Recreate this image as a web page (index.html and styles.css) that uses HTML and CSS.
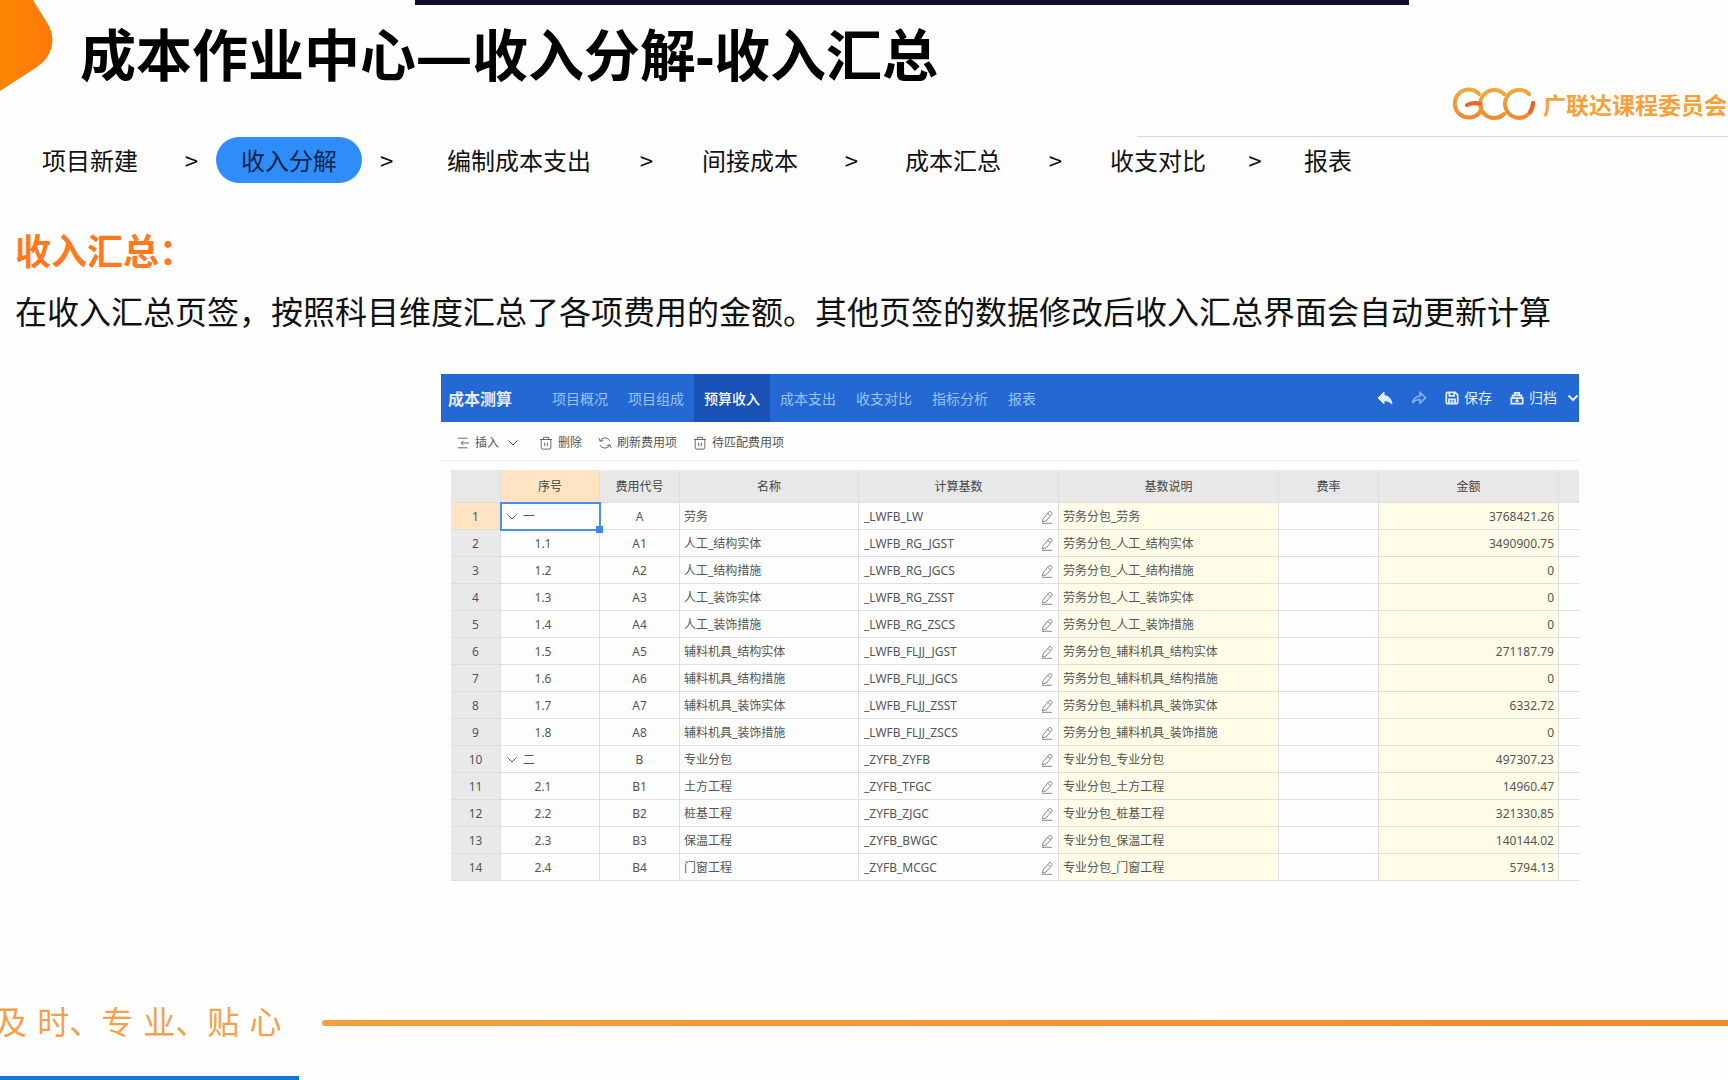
FILE: index.html
```html
<!DOCTYPE html>
<html lang="zh-CN">
<head>
<meta charset="utf-8">
<title>成本作业中心</title>
<link rel="stylesheet" href="styles.css">
</head>
<body>
<svg width="0" height="0" class="defs" aria-hidden="true">
  <symbol id="pen" viewBox="0 0 14 14"><path d="M3 9 8.500 2.200q1.500-1.400 2.800-.2t.4 2.600L6 11 2.300 12zM2 13.300h10M8 3.500l2.500 2"/></symbol>
  <symbol id="chev" viewBox="0 0 12 12"><path d="M1.500 3.500 6 8l4.500-4.500"/></symbol>
  <symbol id="trash" viewBox="0 0 16 16"><path d="M1 4h14M5 4V1.500h6V4M2.500 4v9q0 2 2 2h7q2 0 2-2V4M6.500 7.500v4M9.500 7.500v4"/></symbol>
</svg>
<div class="slide">
  <header class="top">
    <svg class="corner" viewBox="0 0 54 94" aria-hidden="true"><defs><linearGradient id="og" x1="0" x2="1"><stop offset="0" stop-color="#ff8606"/><stop offset="1" stop-color="#fd7a06"/></linearGradient></defs><path fill="url(#og)" d="M0 0H33L49 26Q56 40 49 54Q45 62 34 69L0 91Z"/></svg>
    <div class="notch"></div>
    <h1>成本作业中心—收入分解-收入汇总</h1>
    <div class="brand">
      <svg class="gcc" viewBox="0 0 82 32" aria-hidden="true"><defs><linearGradient id="gg" x1="0" x2="0" y1="0" y2="1"><stop offset="0" stop-color="#f0a83c"/><stop offset="1" stop-color="#f08a2c"/></linearGradient></defs><g fill="none" stroke="url(#gg)" stroke-width="4" stroke-linecap="round"><path d="M26 6A14 14 0 1 0 27 24Q31 15 22 15.500"/><path d="M51 6A14 14 0 1 0 51 26"/><path d="M76 6A14 14 0 1 0 80 15"/></g><path d="M14 17Q20 14 27 15.500M80 15Q79.500 20 77 24" fill="none" stroke="#e8642c" stroke-width="4" stroke-linecap="round"/></svg>
      <span>广联达课程委员会</span>
    </div>
  </header>
  <nav class="steps">
    <a href="#">项目新建</a><i class="late">&gt;</i><a href="#" class="on">收入分解</a><i class="early">&gt;</i><a href="#">编制成本支出</a><i>&gt;</i><a href="#">间接成本</a><i>&gt;</i><a href="#">成本汇总</a><i>&gt;</i><a href="#">收支对比</a><i>&gt;</i><a href="#">报表</a>
  </nav>
  <section class="intro">
    <h2>收入汇总：</h2>
    <p>在收入汇总页签，按照科目维度汇总了各项费用的金额。其他页签的数据修改后收入汇总界面会自动更新计算</p>
  </section>
  <main class="app">
    <div class="bar">
      <strong>成本测算</strong>
      <nav class="tabs"><a href="#">项目概况</a><a href="#">项目组成</a><a href="#" class="on">预算收入</a><a href="#">成本支出</a><a href="#">收支对比</a><a href="#">指标分析</a><a href="#">报表</a></nav>
      <div class="acts">
        <button aria-label="撤销"><svg class="big" viewBox="0 0 16 16"><path fill="currentColor" stroke-width="1" d="M7 2V5.500q7 .5 8 8.500-3-3.500-8-3.500V14L1 8z"/></svg></button>
        <button aria-label="重做" class="dim"><svg class="big" viewBox="0 0 16 16"><path stroke-width="1.500" d="M9 2.500V6Q3 6.500 1.500 13 4.500 9.500 9 9.500V13l5.500-5.200z"/></svg></button>
        <button><svg viewBox="0 0 16 16"><path d="M3 1.500h8.500l3 3V13q0 1.500-1.500 1.500H3Q1.500 14.500 1.500 13V3Q1.500 1.500 3 1.500zM5 2v3.500h5.500V2M4.500 14V9.500h7V14M6.500 12h3"/></svg>保存</button>
        <button><svg viewBox="0 0 16 16"><path d="M1.500 8h13v6.500h-13zM3 8V5h10v3M5.500 5V2h5v3M8 9.500v3M6 11.500h4"/></svg>归档</button>
        <button aria-label="更多" class="more"><svg class="small"><use href="#chev"/></svg></button>
      </div>
    </div>
    <div class="tools">
      <button class="ins"><svg viewBox="0 0 16 16"><path d="M2 2.500h11M6 8h9M2 13.500h11M8.500 5.500 6 8l2.500 2.500"/></svg>插入<svg class="small"><use href="#chev"/></svg></button>
      <button><svg><use href="#trash"/></svg>删除</button>
      <button><svg viewBox="0 0 16 16"><path d="M2.500 6A6 6 0 0 1 13.500 5.500M13.500 10A6 6 0 0 1 2.500 10.500M1 2.500 2.500 6 6 5M15 13.500 13.500 10 10 11"/></svg>刷新费用项</button>
      <button><svg><use href="#trash"/></svg>待匹配费用项</button>
    </div>
    <table>
      <colgroup><col class="w50"><col class="w99"><col class="w80"><col class="w179"><col class="w200"><col><col class="w100"><col class="w180"><col class="w20"></colgroup>
      <thead><tr><th></th><th class="sel">序号</th><th>费用代号</th><th>名称</th><th>计算基数</th><th>基数说明</th><th>费率</th><th>金额</th><th></th></tr></thead>
      <tbody id="rows"></tbody>
    </table>
  </main>
  <footer class="foot"><span>及 时、专 业、贴 心</span><div class="rule"></div></footer>
  <div class="progress"></div>
</div>
<script src="rows.js"></script>
</body>
</html>
```
FILE: styles.css
```css
* { box-sizing: border-box; }
body { margin: 0; background: #fefefe; color: #111; font-family: "Noto Sans", "Noto Sans CJK SC", sans-serif; }
a { color: inherit; text-decoration: none; }
button { border: 0; padding: 0; background: none; color: inherit; font: inherit; display: flex; align-items: center; gap: 5px; }
svg { flex: none; width: 14px; height: 14px; fill: none; stroke: currentColor; stroke-width: 1; }
svg.small { width: 12px; height: 12px; }
svg.defs { position: absolute; width: 0; height: 0; }
.slide { position: relative; min-height: 100vh; display: flex; flex-direction: column; overflow: hidden; }

.top { display: flex; align-items: flex-start; height: 137px; }
.top .corner { position: absolute; left: 0; top: 0; width: 54px; height: 94px; stroke: none; }
.notch { position: absolute; left: 24%; width: 994px; top: 0; height: 5px; background: #100e2c; }
h1 { flex: 1; margin: 0; padding: 14px 0 0 80px; font: 700 56px/80px "Noto Sans", "Noto Sans CJK SC", sans-serif; color: #000; white-space: nowrap; }
.brand { width: 591px; height: 137px; padding: 72px 1px 0 0; display: flex; justify-content: flex-end; align-items: center; gap: 8px; border-bottom: 1px solid #d9d9d9; color: #f7a13a; font: 700 23px/32px "Noto Sans CJK SC", sans-serif; white-space: nowrap; }
.brand .gcc { width: 82px; height: 32px; stroke: none; overflow: visible; }

.steps { display: grid; grid-template-columns: 96px 78px 146px 85px 144px 111px 96px 107px 96px 109px 96px 98px auto; align-items: center; height: 46px; padding-left: 42px; font: 24px/46px "Noto Sans CJK SC", sans-serif; white-space: nowrap; }
.steps i { font-style: normal; font-size: 24px; text-align: center; }
.steps .late { text-align: right; padding-right: 18px; }
.steps .early { text-align: left; padding-left: 18px; }
.steps .on { background: #2f8dfb; border-radius: 23px; text-align: center; color: #0b2447; }

.intro { padding: 40px 15px 0; font-family: "Noto Sans CJK SC", sans-serif; }
h2 { margin: 0; font-size: 36px; line-height: 52px; font-weight: 700; color: #ff7a1c; }
.intro p { margin: 0; padding-top: 11px; font-size: 32px; line-height: 48px; white-space: nowrap; }

.app { margin: 40px 149px 0 441px; font-size: 12px; line-height: 18px; color: #555; }
.bar { display: flex; align-items: stretch; height: 48px; background: #2468d3; color: #e3eeff; font-size: 14px; line-height: 50px; }
.bar strong { padding-left: 7px; width: 101px; font-size: 16px; font-weight: 700; }
.tabs { display: flex; flex: 1; color: #9dc2f8; }
.tabs a { padding: 0 10px; }
.tabs .on { background: #1a52b8; color: #fff; font-weight: 500; }
.acts { display: flex; gap: 18px; }
.acts .dim { color: #8ab4f5; }
.acts svg { stroke-width: 2; }
.acts .big { width: 16px; height: 16px; }
.acts .more { margin-left: -8px; }
.tools { display: flex; align-items: center; gap: 16px; height: 39px; padding: 3px 0 0 15px; border-bottom: 1px solid #eee; }
.tools .ins { margin-right: 4px; }
.ins .small { margin-left: 3px; }

table { margin: 9px 0 0 10px; width: calc(100% - 10px); border-collapse: separate; border-spacing: 0; table-layout: fixed; }
.w50 { width: 50px; } .w99 { width: 99px; } .w80 { width: 80px; } .w179 { width: 179px; } .w200 { width: 200px; } .w100 { width: 100px; } .w180 { width: 180px; } .w20 { width: 20px; }
th, td { padding: 1px 4px 0; border-right: 1px solid #dedede; border-bottom: 1px solid #dedede; white-space: nowrap; font-weight: 400; }
th:last-child, td:last-child { border-right: 0; }
thead th { height: 33px; padding-top: 2px; background: #e8e8e8; color: #444; }
tbody th, tbody td { height: 27px; }
tbody th { background: #e9e9e9; }
thead .sel, tbody .sel { background: #ffe4c4; }
td.c { text-align: center; }
td.n { text-align: center; padding-right: 18px; }
td.g svg { vertical-align: middle; margin: 0 5px 0 1px; }
td.y { background: #fffde8; }
td.r { text-align: right; }
td.cur { position: relative; outline: 2px solid #4a8ff0; outline-offset: -1px; }
td.cur::after { content: ""; position: absolute; right: -4px; bottom: -4px; width: 7px; height: 7px; background: #3f86ee; }
.base { display: flex; justify-content: space-between; align-items: center; padding-left: 1px; }
.base svg { color: #888; }

.foot { display: flex; align-items: center; gap: 40px; margin: auto 0 29px -5px; height: 48px; color: #f3a04a; font: 32px/48px "DejaVu Sans", "Noto Sans CJK SC", sans-serif; white-space: nowrap; }
.rule { flex: 1; height: 6px; border-radius: 3px 0 0 3px; background: linear-gradient(90deg, #f5a03c, #f38a2a); }
.progress { width: 299px; height: 4px; background: #0d78d9; }
```
FILE: rows.js
```js
const rows = [
  ["一", "A", "劳务", "_LWFB_LW", "劳务分包_劳务", "3768421.26"],
  ["1.1", "A1", "人工_结构实体", "_LWFB_RG_JGST", "劳务分包_人工_结构实体", "3490900.75"],
  ["1.2", "A2", "人工_结构措施", "_LWFB_RG_JGCS", "劳务分包_人工_结构措施", "0"],
  ["1.3", "A3", "人工_装饰实体", "_LWFB_RG_ZSST", "劳务分包_人工_装饰实体", "0"],
  ["1.4", "A4", "人工_装饰措施", "_LWFB_RG_ZSCS", "劳务分包_人工_装饰措施", "0"],
  ["1.5", "A5", "辅料机具_结构实体", "_LWFB_FLJJ_JGST", "劳务分包_辅料机具_结构实体", "271187.79"],
  ["1.6", "A6", "辅料机具_结构措施", "_LWFB_FLJJ_JGCS", "劳务分包_辅料机具_结构措施", "0"],
  ["1.7", "A7", "辅料机具_装饰实体", "_LWFB_FLJJ_ZSST", "劳务分包_辅料机具_装饰实体", "6332.72"],
  ["1.8", "A8", "辅料机具_装饰措施", "_LWFB_FLJJ_ZSCS", "劳务分包_辅料机具_装饰措施", "0"],
  ["二", "B", "专业分包", "_ZYFB_ZYFB", "专业分包_专业分包", "497307.23"],
  ["2.1", "B1", "土方工程", "_ZYFB_TFGC", "专业分包_土方工程", "14960.47"],
  ["2.2", "B2", "桩基工程", "_ZYFB_ZJGC", "专业分包_桩基工程", "321330.85"],
  ["2.3", "B3", "保温工程", "_ZYFB_BWGC", "专业分包_保温工程", "140144.02"],
  ["2.4", "B4", "门窗工程", "_ZYFB_MCGC", "专业分包_门窗工程", "5794.13"]
];
document.getElementById("rows").innerHTML = rows.map(([no, code, name, base, note, sum], i) => {
  const group = code.length === 1;
  const first = group
    ? `<td class="g${i ? "" : " cur"}"><svg class="small"><use href="#chev"/></svg>${no}</td>`
    : `<td class="n">${no}</td>`;
  return `<tr><th${i ? "" : ' class="sel"'}>${i + 1}</th>${first}<td class="c">${code}</td><td>${name}</td>` +
    `<td><div class="base">${base}<svg><use href="#pen"/></svg></div></td><td class="y">${note}</td><td></td>` +
    `<td class="y r">${sum}</td><td></td></tr>`;
}).join("");
```
